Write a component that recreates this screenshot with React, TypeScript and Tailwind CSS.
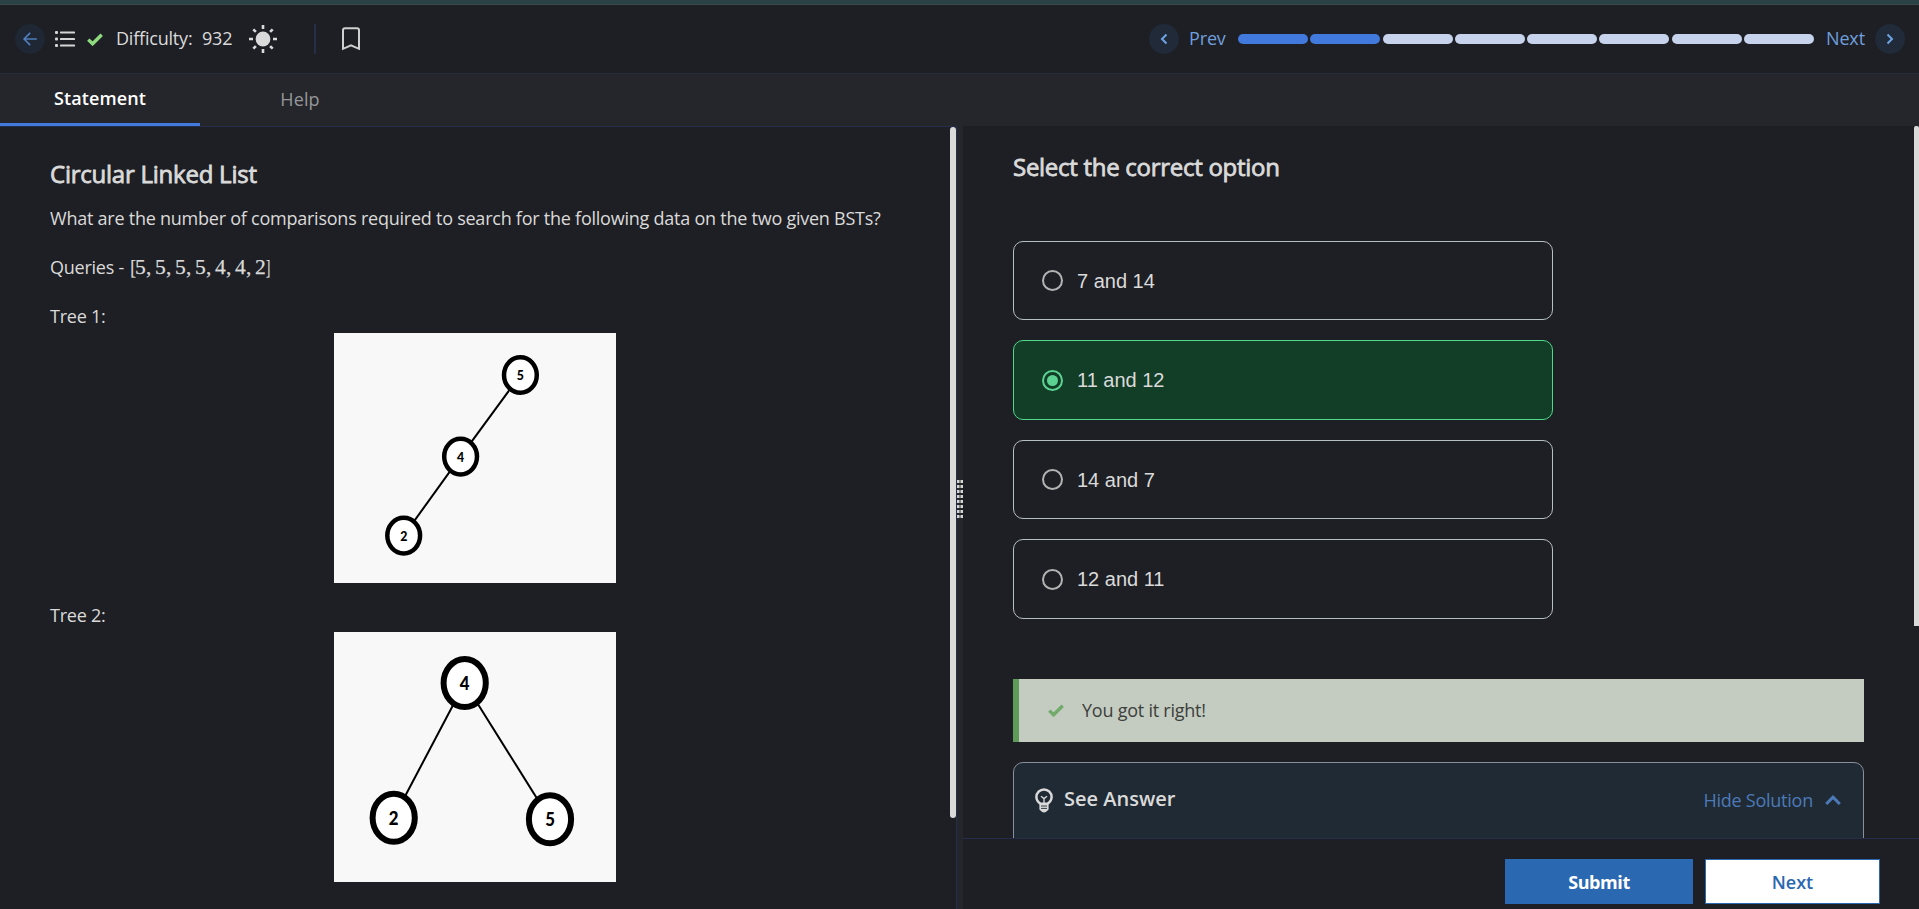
import React from "react";

const BARS = [true, true, false, false, false, false, false, false];

const OPTIONS = [
  { label: "7 and 14", selected: false },
  { label: "11 and 12", selected: true },
  { label: "14 and 7", selected: false },
  { label: "12 and 11", selected: false },
];

const QUERIES = ["5", "5", "5", "5", "4", "4", "2"];

type TreeNode = { x: number; y: number; value: string };

function Check({ className }: { className: string }) {
  return (
    <svg viewBox="0 0 16 13" className={className} fill="none">
      <path d="M1.3 6.6 5.6 10.800 14.700 1.800" stroke="currentColor" strokeWidth="3.400" />
    </svg>
  );
}

function Tree({
  nodes,
  edges,
  rx,
  ry,
  stroke,
  textClass,
  textDy,
}: {
  nodes: TreeNode[];
  edges: [number, number][];
  rx: number;
  ry: number;
  stroke: number;
  textClass: string;
  textDy: number;
}) {
  return (
    <svg viewBox="0 0 282 250" className="block h-[250px] w-[282px] bg-[#f8f8f8]">
      {edges.map(([a, b]) => (
        <line
          key={`${a}-${b}`}
          x1={nodes[a].x}
          y1={nodes[a].y}
          x2={nodes[b].x}
          y2={nodes[b].y}
          stroke="#000"
          strokeWidth="2"
        />
      ))}
      {nodes.map((n) => (
        <g key={n.value} transform={`translate(${n.x} ${n.y})`}>
          <ellipse rx={rx} ry={ry} fill="#fff" stroke="#000" strokeWidth={stroke} />
          <text y={textDy} textAnchor="middle" transform="scale(0.88 1)" className={textClass}>
            {n.value}
          </text>
        </g>
      ))}
    </svg>
  );
}

function Header() {
  return (
    <header className="flex h-[69px] shrink-0 items-center border-b border-[#272c3c] pr-[14px] pl-[15px]">
      <div className="flex h-[30px] w-[30px] items-center justify-center rounded-full bg-[#1e2733]">
        <svg viewBox="0 0 14 14" className="h-[14px] w-[14px] text-[#4f7fbd]" fill="none" stroke="currentColor" strokeWidth="1.600">
          <path d="M13.800 7H1.200M7.200 0.900 1.100 7l6.100 6.100" />
        </svg>
      </div>
      <svg viewBox="0 0 20 16" className="ml-[10px] h-4 w-5 text-[#d5d5d5]" fill="currentColor">
        <rect x="0" y="0" width="3" height="3" rx="1" />
        <rect x="5" y="0.500" width="15" height="2" rx="0.600" />
        <rect x="0" y="6.500" width="3" height="3" rx="1" />
        <rect x="5" y="7" width="15" height="2" rx="0.600" />
        <rect x="0" y="13" width="3" height="3" rx="1" />
        <rect x="5" y="13.500" width="15" height="2" rx="0.600" />
      </svg>
      <Check className="ml-3 h-[13px] w-4 text-[#8fdc80]" />
      <span className="ml-[13px] w-[86px] pb-[2px] text-[18px] whitespace-nowrap tracking-[-0.200px]">Difficulty:</span>
      <span className="w-[47px] pb-[2px] text-[18px] tracking-[-0.200px]">932</span>
      <svg viewBox="0 0 28 28" className="mb-px h-7 w-7 text-[#dadada]">
        <circle cx="14" cy="14" r="7.400" fill="currentColor" />
        <g stroke="currentColor" strokeWidth="2.600">
          <path d="M14 0v4M14 24v4M0 14h4M24 14h4M4.300 4.300l2.600 2.600M21.100 21.100l2.600 2.600M4.300 23.700l2.600-2.600M21.100 6.900l2.600-2.600" />
        </g>
      </svg>
      <div className="ml-[37px] h-[30px] w-[2px] bg-[#262f49]" />
      <svg viewBox="0 0 18 24" className="ml-[26px] h-6 w-[18px] text-[#d0d0d0]" fill="none" stroke="currentColor" strokeWidth="2">
        <path d="M1 21.800V3.200Q1 1.200 3 1.200h12q2 0 2 2v18.600L9 18.300z" />
      </svg>

      <div className="ml-auto flex h-[30px] w-[30px] items-center justify-center rounded-full bg-[#202a38]">
        <svg viewBox="0 0 8 12" className="h-3 w-2 text-[#6ea3e6]" fill="none" stroke="currentColor" strokeWidth="2">
          <path d="M6.500 1.500 2 6l4.500 4.500" />
        </svg>
      </div>
      <span className="ml-[10px] w-[49px] pb-[2px] text-[18px] tracking-[-0.150px] text-[#6f9edd]">Prev</span>
      <div className="flex w-[576px] gap-[2.300px]">
        {BARS.map((done, i) => (
          <div key={i} className={done ? "h-[10px] flex-1 rounded-full bg-[#4179dc]" : "h-[10px] flex-1 rounded-full bg-[#c7d3ec]"} />
        ))}
      </div>
      <span className="ml-[12px] w-[49px] pb-[2px] text-[18px] tracking-[-0.150px] text-[#6f9edd]">Next</span>
      <div className="flex h-[30px] w-[30px] items-center justify-center rounded-full bg-[#202a38]">
        <svg viewBox="0 0 8 12" className="h-3 w-2 text-[#6ea3e6]" fill="none" stroke="currentColor" strokeWidth="2">
          <path d="M1.500 1.500 6 6l-4.500 4.500" />
        </svg>
      </div>
    </header>
  );
}

function Statement() {
  return (
    <section className="flex w-[956px] shrink-0 justify-between border-t border-[#242d49]">
      <div className="flex w-[900px] flex-col pl-[50px] text-[18px] leading-[30px] tracking-[-0.240px]">
        <h1 className="mt-[32px] text-[24px] leading-[30px] whitespace-nowrap [-webkit-text-stroke:0.800px_currentColor]">
          Circular Linked List
        </h1>
        <p className="mt-[14px] whitespace-nowrap">
          What are the number of comparisons required to search for the following data on the two given BSTs?
        </p>
        <p className="mt-[19px] flex whitespace-nowrap">
          <span className="w-[79px]">Queries -</span>
          <span className="flex font-['Liberation_Serif',serif] text-[21.500px] tracking-normal [-webkit-text-stroke:0.250px_currentColor]">
            <span className="w-[6px] origin-right scale-x-80">[</span>
            {QUERIES.map((q, i) => (
              <span key={i} className={i < 6 ? "flex w-5" : "w-[11px]"}>
                <span className="w-[11px]">{q}</span>
                {i < 6 && <span>,</span>}
              </span>
            ))}
            <span className="origin-left scale-x-60">]</span>
          </span>
        </p>
        <p className="mt-[19px]">Tree 1:</p>
        <div className="mt-[2px] ml-[284px]">
          <Tree
            nodes={[
              { x: 186.400, y: 42, value: "5" },
              { x: 126.600, y: 123.600, value: "4" },
              { x: 69.700, y: 202.600, value: "2" },
            ]}
            edges={[
              [0, 1],
              [1, 2],
            ]}
            rx={16.400}
            ry={17.800}
            stroke={4.500}
            textClass="fill-black font-['Lato',sans-serif] text-[14px] font-black tracking-normal"
            textDy={4.900}
          />
        </div>
        <p className="mt-[17px]">Tree 2:</p>
        <div className="mt-[2px] ml-[284px]">
          <Tree
            nodes={[
              { x: 130.700, y: 51, value: "4" },
              { x: 59.700, y: 185.800, value: "2" },
              { x: 216, y: 187.200, value: "5" },
            ]}
            edges={[
              [0, 1],
              [0, 2],
            ]}
            rx={21.100}
            ry={24}
            stroke={6}
            textClass="fill-black font-['Lato',sans-serif] text-[19px] font-black tracking-normal"
            textDy={7}
          />
        </div>
      </div>
      <div className="h-[691px] w-[6px] rounded-full bg-[#dadada]" />
    </section>
  );
}

function Splitter() {
  return (
    <div className="flex w-[7px] shrink-0 flex-col border-l border-[#242d49] bg-[#25262b]">
      <div className="mt-[354px] flex flex-col gap-[2px]">
        {Array.from({ length: 8 }, (_, i) => (
          <div key={i} className="flex h-[3px] justify-between">
            <div className="w-[2px] bg-[#d5d5d5]" />
            <div className="w-[2px] bg-[#85857f]" />
            <div className="w-[2px] bg-[#d5d5d5]" />
          </div>
        ))}
      </div>
    </div>
  );
}

function Option({ label, selected }: { label: string; selected: boolean }) {
  return (
    <div
      className={
        selected
          ? "flex h-[79.500px] items-center rounded-[10px] border border-[#4fd98a] bg-[#123d27] pl-7"
          : "flex h-[79.500px] items-center rounded-[10px] border border-[#b4c0c2] pl-7"
      }
    >
      <div
        className={
          selected
            ? "mt-px flex h-[21px] w-[21px] items-center justify-center rounded-full border-2 border-[#5bd292]"
            : "mt-px h-[21px] w-[21px] rounded-full border-2 border-[#b3b3b3]"
        }
      >
        {selected && <div className="h-[11px] w-[11px] rounded-full bg-[#5bd292]" />}
      </div>
      <span className="ml-[14px] pt-px font-['Liberation_Sans',Arial,sans-serif] text-[20px]">{label}</span>
    </div>
  );
}

function Answer() {
  return (
    <section className="flex min-w-0 flex-1 flex-col">
      <div className="flex h-[712px] justify-between overflow-hidden">
        <div className="flex w-[901px] flex-col pl-[50px]">
          <h2 className="mt-[26px] text-[24px] leading-[30px] tracking-[-0.280px] whitespace-nowrap [-webkit-text-stroke:0.800px_currentColor]">
            Select the correct option
          </h2>
          <div className="mt-[58.700px] flex w-[540px] flex-col gap-5">
            {OPTIONS.map((o) => (
              <Option key={o.label} label={o.label} selected={o.selected} />
            ))}
          </div>
          <div className="mt-[60.300px] flex h-[63px] shrink-0 items-center border-l-[6px] border-[#5f9b58] bg-[#c4ccc1] pl-[29px] text-[#3c403c]">
            <Check className="h-[13px] w-4 text-[#71ab6b]" />
            <span className="ml-[18px] text-[18px] tracking-[-0.240px]">You got it right!</span>
          </div>
          <div className="mt-5 flex h-[120px] shrink-0 items-start rounded-t-[10px] border border-[#88919b] bg-[#202a34] pt-[24px] pr-[22px] pl-[21px]">
            <svg viewBox="0 0 18 25" className="mt-px h-[25px] w-[18px] text-[#dadada]" fill="none" stroke="currentColor">
              <path d="M5.600 15.800C3.200 14.300 1.400 12 1.400 9a7.600 7.600 0 0 1 15.200 0c0 3-1.800 5.300-4.200 6.800z" strokeWidth="2.500" />
              <path d="M6 8.200 9 10.600l3-2.400M9 10.600v5" strokeWidth="1.300" />
              <path d="M4.400 15.500h9.200v6l-2.400 2.200q-2.200 1.600-4.400 0l-2.400-2.200z" fill="currentColor" stroke="none" />
              <path d="M6 18h6M6 20.400h6" stroke="#202a34" strokeWidth="0.900" />
            </svg>
            <span className="ml-[11px] text-[20px] leading-6 font-semibold">See Answer</span>
            <div className="ml-auto flex items-center text-[#4c7ab8]">
              <span className="text-[18px] leading-[26px] tracking-[-0.240px]">Hide Solution</span>
              <svg viewBox="0 0 16 10" className="ml-3 h-[10px] w-4" fill="none" stroke="currentColor" strokeWidth="3">
                <path d="M1.200 9 8 2.200 14.800 9" />
              </svg>
            </div>
          </div>
        </div>
        <div className="h-[500px] w-[5px] rounded-t-[2px] bg-[#dadada]" />
      </div>
      <footer className="flex flex-1 items-start gap-3 border-t border-[#242d49] pt-5 pl-[542px]">
        <button className="h-[45px] w-[188px] bg-[#2a68b1] pt-[2px] text-[18px] font-bold tracking-[-0.400px] text-white">Submit</button>
        <button className="h-[45px] w-[175px] border border-[#2a68b1] bg-white pt-[2px] text-[18px] font-semibold text-[#2a68b1]">Next</button>
      </footer>
    </section>
  );
}

export default function App() {
  return (
    <div className="flex h-[909px] w-[1919px] flex-col overflow-hidden bg-[#1e1f24] font-['Open_Sans','Noto_Sans',sans-serif] text-[#dadada]">
      <div className="h-[5px] shrink-0 border-b border-[#3a4a4c] bg-[#2a4146]" />
      <Header />
      <nav className="flex h-[52px] shrink-0 bg-[#25262b] text-[18px]">
        <div className="flex w-[200px] items-center justify-center border-b-[3px] border-[#4179dc] font-semibold tracking-[0.120px] text-white">Statement</div>
        <div className="flex w-[200px] items-center justify-center pb-[2px] tracking-[0.100px] text-[#96969a]">Help</div>
      </nav>
      <main className="flex min-h-0 flex-1">
        <Statement />
        <Splitter />
        <Answer />
      </main>
    </div>
  );
}
